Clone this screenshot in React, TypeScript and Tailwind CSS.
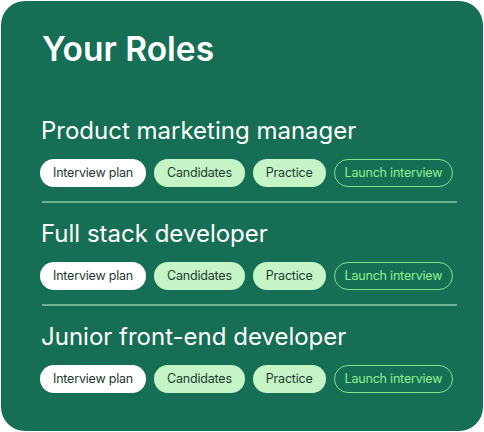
const roles = ["Product marketing manager", "Full stack developer", "Junior front-end developer"];

const RoleRow = ({ title, last }: { title: string; last: boolean }) => {
  return (
    <div>
      <h3 className="ml-px text-[24px] leading-8 font-normal text-white">{title}</h3>
      <div className="mt-3 flex items-center gap-2 text-[12.5px] tracking-[-0.2px]">
        <button className="h-7 px-[13px] rounded-full bg-white text-[#1d3a2e]">Interview plan</button>
        <button className="h-7 px-[13px] rounded-full bg-[#c5f4c7] text-[#1d3a2e]">Candidates</button>
        <button className="h-7 px-[13px] rounded-full bg-[#c5f4c7] text-[#1d3a2e]">Practice</button>
        <button className="h-7 px-[10px] rounded-full border border-[#86e38a] text-[#8ff092]">Launch interview</button>
      </div>
      {!last && <div className="ml-[2px] mt-[14px] mb-[15px] h-[2px] w-[415px] bg-[#6db491]" />}
    </div>
  );
};

const App = () => {
  return (
    <div className="p-px" style={{ fontFamily: "Inter, 'Noto Sans', sans-serif" }}>
      <div className="w-[482px] h-[430px] rounded-[24px] bg-[#166f54] pl-[39px] pt-[28px]">
        <h2 className="ml-[2px] text-[33.5px] leading-10 font-semibold text-white">Your Roles</h2>
        <div className="mt-[46px]">
          {roles.map((r, i) => (
            <RoleRow key={r} title={r} last={i === roles.length - 1} />
          ))}
        </div>
      </div>
    </div>
  );
};

export default App;
